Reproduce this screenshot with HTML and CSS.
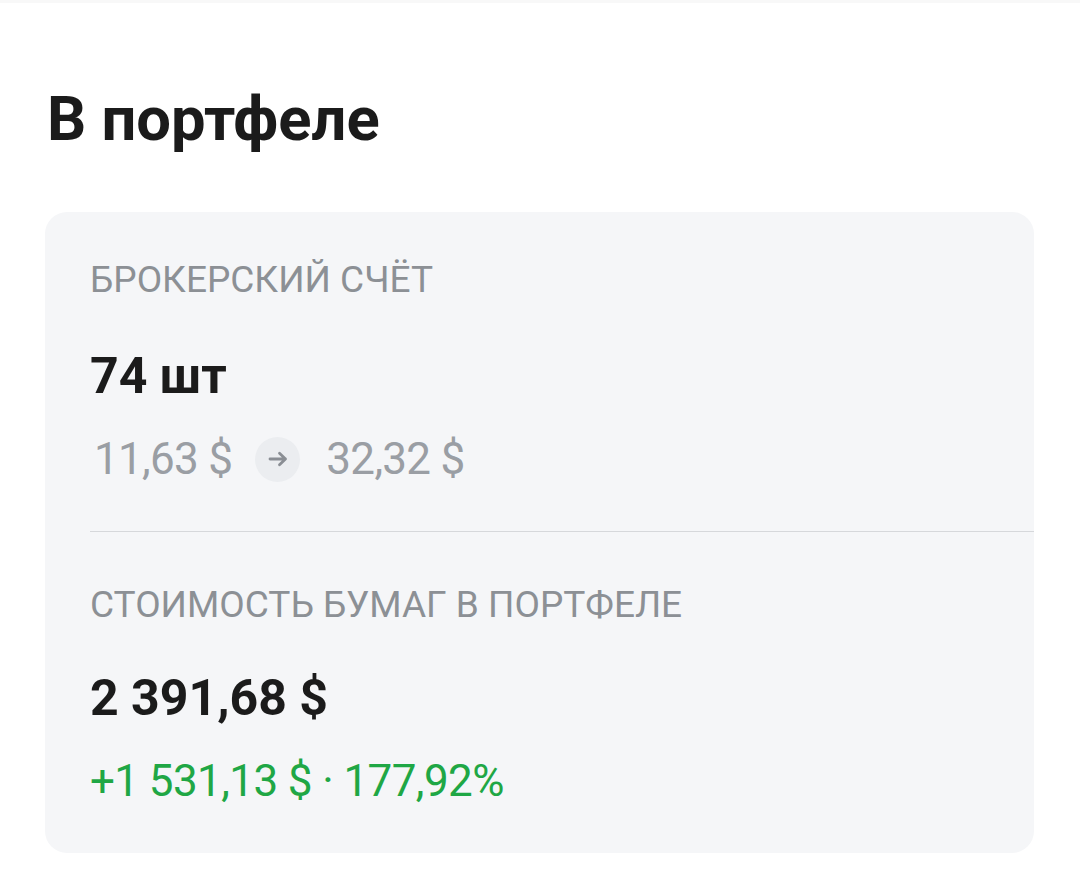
FILE: index.html
```html
<!DOCTYPE html>
<html lang="ru">
<head>
<meta charset="utf-8">
<title>В портфеле</title>
<link rel="stylesheet" href="styles.css">
</head>
<body>
<div class="topbar"></div>
<main class="page">
  <h1 class="title">В портфеле</h1>
  <section class="card">
    <div class="label">БРОКЕРСКИЙ СЧЁТ</div>
    <div class="value value-qty">74 шт</div>
    <div class="prices">
      <span class="price">11,63 $</span>
      <span class="arrow">
        <svg width="22" height="22" viewBox="0 0 22 22" aria-hidden="true">
          <path d="M3 11h15.5M12.5 5.2L18.5 11l-6 5.8" fill="none" stroke="#8a8e94" stroke-width="2.8" stroke-linecap="round" stroke-linejoin="round"/>
        </svg>
      </span>
      <span class="price">32,32 $</span>
    </div>
    <div class="divider"></div>
    <div class="label label-second">СТОИМОСТЬ БУМАГ В ПОРТФЕЛЕ</div>
    <div class="value value-sum">2 391,68 $</div>
    <div class="gain">+1 531,13 $ · 177,92%</div>
  </section>
</main>
</body>
</html>
```

FILE: styles.css
```css
* { box-sizing: border-box; }
html, body {
  margin: 0;
  padding: 0;
  background: #ffffff;
  font-family: Roboto, "Noto Sans", sans-serif;
}
.topbar {
  height: 3px;
  background: #f8f8f8;
}
.page {
  padding: 80px 46px 0 45px;
}
.title {
  margin: 0;
  font-size: 61.5px;
  line-height: 72px;
  font-weight: 700;
  color: #1b1b1b;
  padding-left: 2px;
}
.card {
  margin-top: 57px;
  background: #f5f6f8;
  border-radius: 22px;
  padding: 46px 0 44px 45px;
}
.label {
  font-size: 37px;
  line-height: 44px;
  color: #8c9095;
  font-weight: 400;
}
.value {
  font-size: 50px;
  line-height: 56px;
  font-weight: 700;
  color: #1b1b1b;
  margin-top: 46px;
}
.prices {
  display: flex;
  align-items: center;
  margin-top: 27px;
  height: 56px;
}
.price {
  font-size: 44px;
  line-height: 56px;
  color: #9a9ea4;
  letter-spacing: -0.7px;
  padding-left: 4px;
}
.arrow {
  width: 45px;
  height: 45px;
  border-radius: 50%;
  background: #ebedf0;
  display: flex;
  align-items: center;
  justify-content: center;
  margin: 0 22px 0 23px;
}
.divider {
  height: 1px;
  background: #d6d8db;
  margin-top: 44px;
}
.label-second {
  margin-top: 51px;
}
.value-sum {
  margin-top: 43px;
}
.gain {
  margin-top: 27px;
  font-size: 44px;
  line-height: 56px;
  color: #1fa745;
  letter-spacing: -0.6px;
}
```
